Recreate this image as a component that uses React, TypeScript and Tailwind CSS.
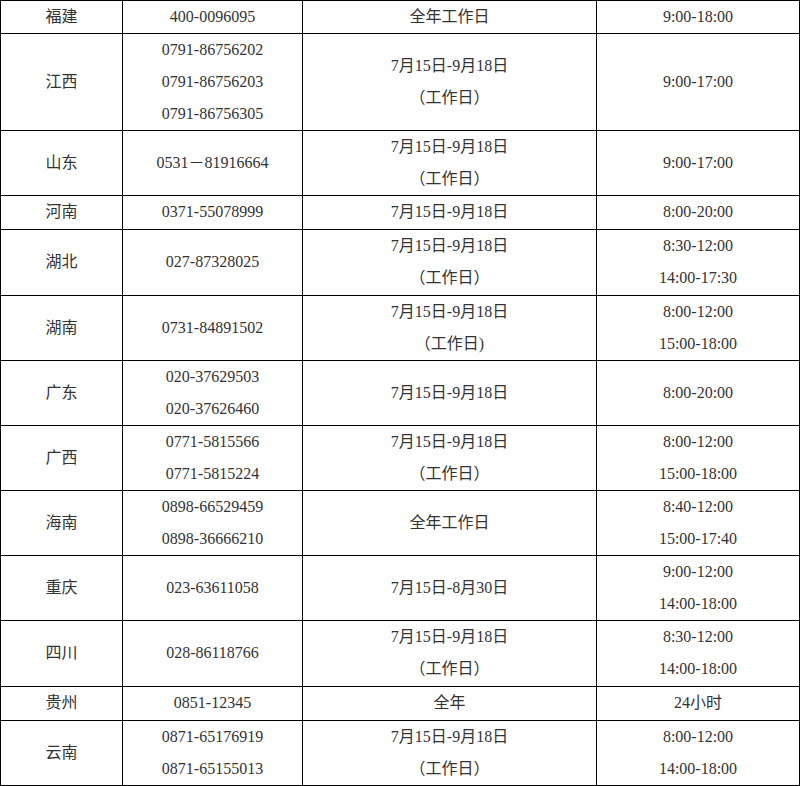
import React from "react";

type Row = { p: string; t: string[]; d: string[]; h: string[]; x?: boolean };

const rows: Row[] = [
  { p: "福建", t: ["400-0096095"], d: ["全年工作日"], h: ["9:00-18:00"] },
  { p: "江西", t: ["0791-86756202", "0791-86756203", "0791-86756305"], d: ["7月15日-9月18日", "（工作日）"], h: ["9:00-17:00"] },
  { p: "山东", t: ["0531－81916664"], d: ["7月15日-9月18日", "（工作日）"], h: ["9:00-17:00"] },
  { p: "河南", t: ["0371-55078999"], d: ["7月15日-9月18日"], h: ["8:00-20:00"], x: true },
  { p: "湖北", t: ["027-87328025"], d: ["7月15日-9月18日", "（工作日）"], h: ["8:30-12:00", "14:00-17:30"], x: true },
  { p: "湖南", t: ["0731-84891502"], d: ["7月15日-9月18日", "（工作日)"], h: ["8:00-12:00", "15:00-18:00"] },
  { p: "广东", t: ["020-37629503", "020-37626460"], d: ["7月15日-9月18日"], h: ["8:00-20:00"] },
  { p: "广西", t: ["0771-5815566", "0771-5815224"], d: ["7月15日-9月18日", "（工作日）"], h: ["8:00-12:00", "15:00-18:00"] },
  { p: "海南", t: ["0898-66529459", "0898-36666210"], d: ["全年工作日"], h: ["8:40-12:00", "15:00-17:40"] },
  { p: "重庆", t: ["023-63611058"], d: ["7月15日-8月30日"], h: ["9:00-12:00", "14:00-18:00"] },
  { p: "四川", t: ["028-86118766"], d: ["7月15日-9月18日", "（工作日）"], h: ["8:30-12:00", "14:00-18:00"], x: true },
  { p: "贵州", t: ["0851-12345"], d: ["全年"], h: ["24小时"], x: true },
  { p: "云南", t: ["0871-65176919", "0871-65155013"], d: ["7月15日-9月18日", "（工作日）"], h: ["8:00-12:00", "14:00-18:00"] },
];

function Cell({ lines, x }: { lines: string[]; x?: boolean }) {
  return (
    <td className={x ? "border border-black p-0 pb-px text-center align-middle" : "border border-black p-0 text-center align-middle"}>
      {lines.map((l, i) => (
        <p key={i} className="m-0 leading-[32px]">
          {l}
        </p>
      ))}
    </td>
  );
}

export default function App() {
  return (
    <div
      className="bg-white text-[16px] text-[#333333]"
      style={{ fontFamily: '"Liberation Serif", "Noto Sans CJK SC", serif' }}
    >
      <table className="w-[799px] table-fixed border-collapse">
        <colgroup>
          <col className="w-[122px]" />
          <col className="w-[180px]" />
          <col className="w-[294px]" />
          <col className="w-[203px]" />
        </colgroup>
        <tbody>
          {rows.map((r) => (
            <tr key={r.p}>
              <Cell lines={[r.p]} x={r.x} />
              <Cell lines={r.t} x={r.x} />
              <Cell lines={r.d} x={r.x} />
              <Cell lines={r.h} x={r.x} />
            </tr>
          ))}
        </tbody>
      </table>
    </div>
  );
}
